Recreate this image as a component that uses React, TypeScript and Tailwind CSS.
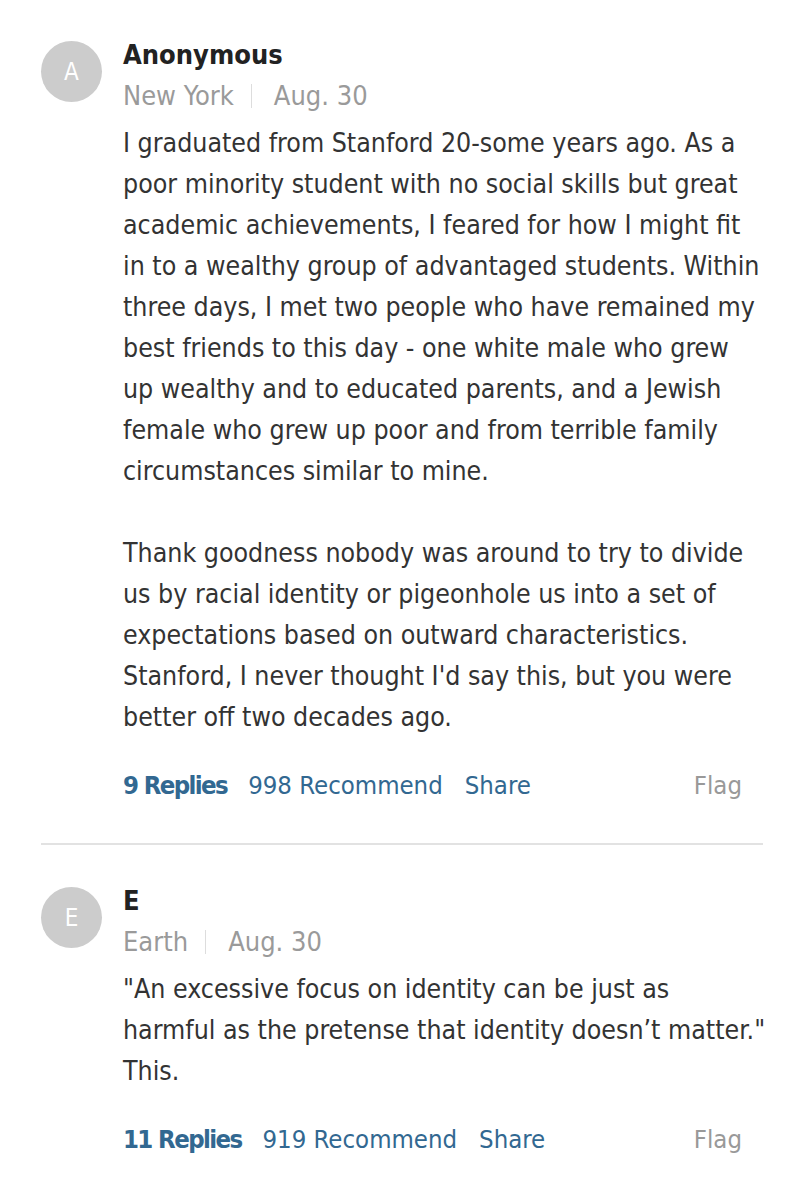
import React from 'react';

type Comment = {
  initial: string;
  name: string;
  location: string;
  date: string;
  paragraphs: string[][];
  replies: number;
  recommend: number;
};

const comments: Comment[] = [
  {
    initial: 'A',
    name: 'Anonymous',
    location: 'New York',
    date: 'Aug. 30',
    paragraphs: [
      [
        'I graduated from Stanford 20-some years ago. As a',
        'poor minority student with no social skills but great',
        'academic achievements, I feared for how I might fit',
        'in to a wealthy group of advantaged students. Within',
        'three days, I met two people who have remained my',
        'best friends to this day - one white male who grew',
        'up wealthy and to educated parents, and a Jewish',
        'female who grew up poor and from terrible family',
        'circumstances similar to mine.',
      ],
      [
        'Thank goodness nobody was around to try to divide',
        'us by racial identity or pigeonhole us into a set of',
        'expectations based on outward characteristics.',
        "Stanford, I never thought I'd say this, but you were",
        'better off two decades ago.',
      ],
    ],
    replies: 9,
    recommend: 998,
  },
  {
    initial: 'E',
    name: 'E',
    location: 'Earth',
    date: 'Aug. 30',
    paragraphs: [
      [
        '"An excessive focus on identity can be just as',
        'harmful as the pretense that identity doesn\u2019t matter."',
        'This.',
      ],
    ],
    replies: 11,
    recommend: 919,
  },
];

function CommentBlock({ c }: { c: Comment }) {
  return (
    <div className="flex gap-[21px]">
      <div className="w-[61px] h-[61px] rounded-full bg-[#cccccc] flex items-center justify-center text-white text-[24px] font-light shrink-0 mt-[10px]">
        {c.initial}
      </div>
      <div className="flex-1 min-w-0 pt-[6px]">
        <div className="text-[27px] font-bold text-[#222] leading-[36px]">{c.name}</div>
        <div className="flex items-center text-[27px] text-[#9a9a9a] leading-[36px] mt-[5px]">
          <span>{c.location}</span>
          <span className="ml-[17px] mr-[22px] w-px h-[24px] bg-[#dddddd]" />
          <span>{c.date}</span>
        </div>
        <div className="mt-[8px] text-[26.5px] leading-[41px] text-[#333]">
          {c.paragraphs.map((p, i) => (
            <p key={i} className={i > 0 ? 'mt-[41px]' : ''}>
              {p.map((line, j) => (
                <span key={j} className="block whitespace-nowrap">
                  {line}
                </span>
              ))}
            </p>
          ))}
        </div>
        <div className="flex items-center mt-[30px] text-[25.5px] leading-[36px] pr-[21px]">
          <span className="font-bold tracking-[-1.6px] text-[#326891]">{c.replies} Replies</span>
          <span className="ml-[21px] text-[#326891]">{c.recommend} Recommend</span>
          <span className="ml-[22px] text-[#326891]">Share</span>
          <span className="ml-auto text-[#999]">Flag</span>
        </div>
      </div>
    </div>
  );
}

export default function App() {
  return (
    <div
      className="min-h-screen bg-white pl-[41px] pr-[41px] pt-[31px]"
      style={{ fontFamily: '"Liberation Sans Narrow", "DejaVu Sans Condensed", "Roboto Condensed", "Liberation Sans", sans-serif' }}
    >
      <CommentBlock c={comments[0]} />
      <div className="h-[2px] bg-[#e2e2e2] mt-[40px] mb-[32px]" />
      <CommentBlock c={comments[1]} />
    </div>
  );
}
